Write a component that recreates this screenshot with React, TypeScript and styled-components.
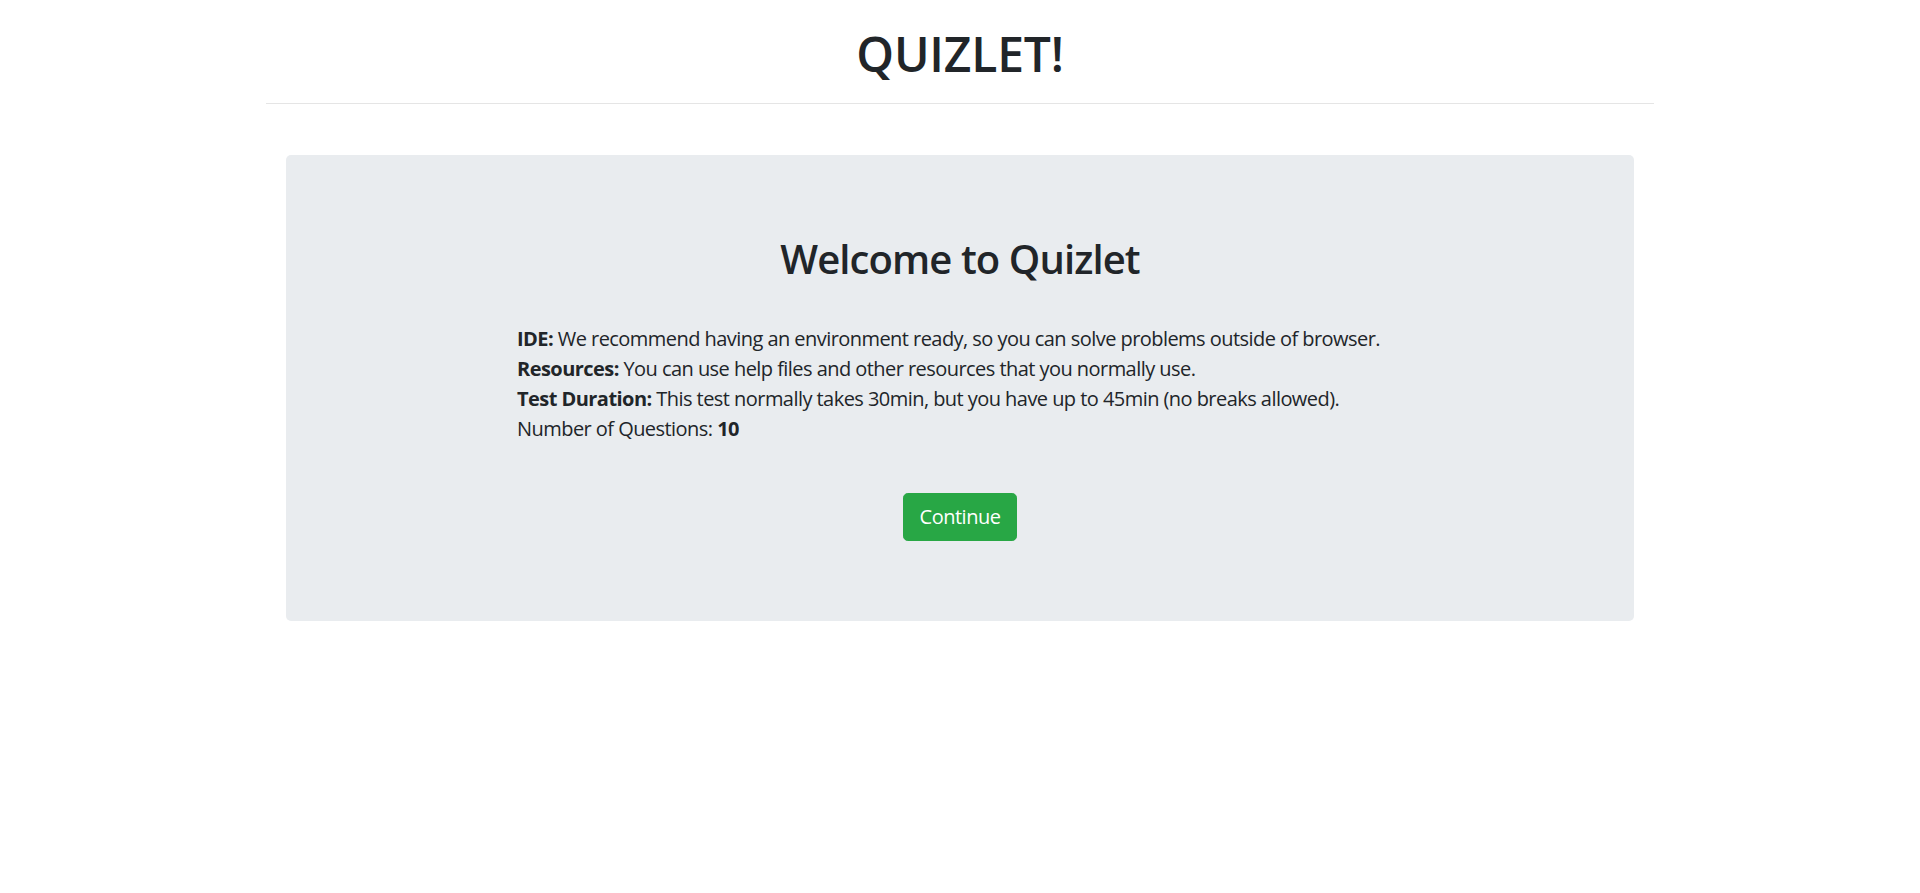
import styled, { createGlobalStyle } from "styled-components";

const GlobalStyle = createGlobalStyle`
    * {
        box-sizing: border-box;
    }
    body {
        margin: 0;
        background-color: #ffffff;
        color: #212529;
        font-family: "Segoe UI", "Open Sans", "Noto Sans", sans-serif;
    }
`

const Container = styled.div`
    width: 1388px;
    margin: 0 auto;
`

const Header = styled.header`
    padding-top: 25px;
    height: 104px;
    border-bottom: 1px solid #e5e5e5;
    text-align: center;

    h1 {
        margin: 0;
        font-size: 48px;
        font-weight: 600;
        letter-spacing: -0.2px;
        line-height: 1.2;
    }
`

const Main = styled.main`
    padding: 51px 20px 0;
`

const Jumbotron = styled.section`
    background-color: #e9ecef;
    border-radius: 5px;
    padding: 80px 32px 80px;
    display: flex;
    flex-direction: column;
    align-items: center;
`

const Titulo = styled.h2`
    margin: 0 0 41px;
    font-size: 40px;
    font-weight: 600;
    letter-spacing: -0.9px;
    line-height: 48px;
`

const Info = styled.div`
    width: 886px;
    margin-bottom: 49px;
    font-size: 20px;
    line-height: 30px;
    letter-spacing: -0.55px;
    white-space: nowrap;

    p {
        margin: 0;
    }

    strong {
        font-weight: 700;
    }
`

const Botao = styled.button`
    height: 48px;
    padding: 0 16px;
    border: 1px solid #28a745;
    border-radius: 4.8px;
    background-color: #28a745;
    color: #ffffff;
    font-family: inherit;
    font-size: 20px;
    letter-spacing: -0.5px;
    line-height: 30px;
    cursor: pointer;

    &:hover {
        background-color: #218838;
    }
`

const App = () => {
    return (
        <>
            <GlobalStyle />
            <Container>
                <Header>
                    <h1>QUIZLET!</h1>
                </Header>
                <Main>
                    <Jumbotron>
                        <Titulo>Welcome to Quizlet</Titulo>
                        <Info>
                            <p><strong>IDE:</strong> We recommend having an environment ready, so you can solve problems outside of browser.</p>
                            <p><strong>Resources:</strong> You can use help files and other resources that you normally use.</p>
                            <p><strong>Test Duration:</strong> This test normally takes 30min, but you have up to 45min (no breaks allowed).</p>
                            <p>Number of Questions: <strong>10</strong></p>
                        </Info>
                        <Botao>Continue</Botao>
                    </Jumbotron>
                </Main>
            </Container>
        </>
    )
}
export default App
